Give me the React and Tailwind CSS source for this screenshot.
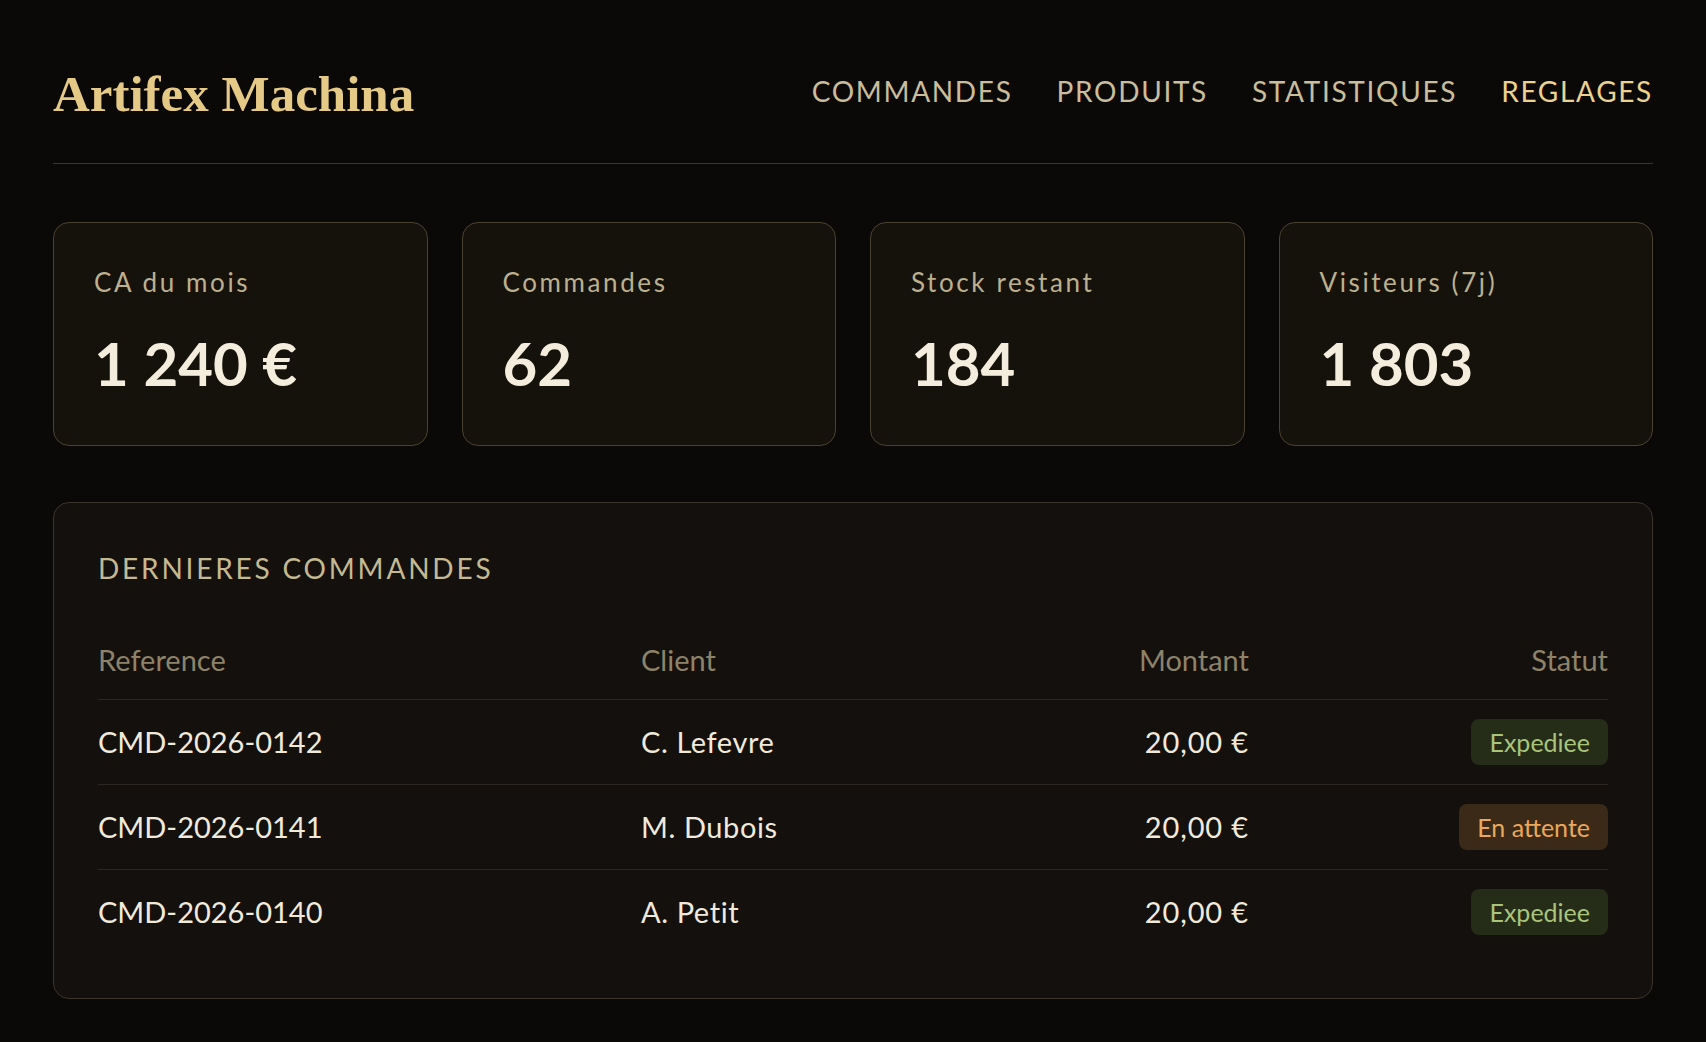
const stats = [
  { label: "CA du mois", value: "1 240 €" },
  { label: "Commandes", value: "62" },
  { label: "Stock restant", value: "184" },
  { label: "Visiteurs (7j)", value: "1 803" },
];

const orders = [
  { ref: "CMD-2026-0142", client: "C. Lefevre", amount: "20,00 €", status: "shipped" },
  { ref: "CMD-2026-0141", client: "M. Dubois", amount: "20,00 €", status: "pending" },
  { ref: "CMD-2026-0140", client: "A. Petit", amount: "20,00 €", status: "shipped" },
];

const navItems = ["Commandes", "Produits", "Statistiques", "Reglages"];

const StatusBadge = ({ status }) =>
  status === "shipped" ? (
    <span className="inline-block rounded-lg bg-[#252c18] px-[18px] py-[6px] text-[25px] leading-[34px] text-[#a9c57b]">
      Expediee
    </span>
  ) : (
    <span className="inline-block rounded-lg bg-[#3b2a18] px-[18px] py-[6px] text-[25px] leading-[34px] text-[#e9a85a]">
      En attente
    </span>
  );

const App = () => {
  return (
    <div className="min-h-screen bg-[#0b0907] font-['Lato','Noto_Sans',sans-serif]">
      <div className="mx-auto max-w-[1600px]">
        <header className="flex items-center justify-between border-b border-[#3d3526] pt-16 pb-[38px]">
          <h1 className="font-['Liberation_Serif','Times_New_Roman',serif] text-[51px] font-bold leading-[61px] text-[#e5c987]">
            Artifex Machina
          </h1>
          <nav className="mb-2 flex gap-[44px]">
            {navItems.map((item, i) => (
              <a
                key={item}
                href="#"
                className={
                  i === navItems.length - 1
                    ? "text-[28px] uppercase leading-[42px] tracking-[0.06em] text-[#ecd28e]"
                    : "text-[28px] uppercase leading-[42px] tracking-[0.06em] text-[#c9bd9b]"
                }
              >
                {item}
              </a>
            ))}
          </nav>
        </header>

        <section className="mt-[58px] grid grid-cols-4 gap-[34px]">
          {stats.map((s) => (
            <div
              key={s.label}
              className="rounded-2xl border border-[#4a4230] bg-[#15120c] px-10 pt-10 pb-[52px]"
            >
              <div className="text-[26px] leading-[39px] tracking-[0.1em] text-[#bdb08e]">
                {s.label}
              </div>
              <div className="mt-[31px] text-[60px] font-bold leading-[60px] text-[#f4eddd]">
                {s.value}
              </div>
            </div>
          ))}
        </section>

        <section className="mt-14 rounded-2xl border border-[#3b342a] bg-[#13100d] p-11">
          <h2 className="text-[28px] uppercase leading-[42px] tracking-[0.1em] text-[#c5b991]">
            Dernieres commandes
          </h2>

          <div className="mt-[29px]">
            <div className="grid grid-cols-[543px_1fr_1fr_359px] border-b border-[#2c2720] pt-[21px] pb-[18px] text-[29px] leading-[42px] text-[#8e8269]">
              <div>Reference</div>
              <div>Client</div>
              <div className="text-right">Montant</div>
              <div className="text-right">Statut</div>
            </div>
            {orders.map((o, i) => (
              <div
                key={o.ref}
                className={
                  i < orders.length - 1
                    ? "grid grid-cols-[543px_1fr_1fr_359px] items-center border-b border-[#2c2720] py-[21px] text-[29px] leading-[42px] text-[#f1eadb]"
                    : "grid grid-cols-[543px_1fr_1fr_359px] items-center py-[21px] text-[29px] leading-[42px] text-[#f1eadb]"
                }
              >
                <div>{o.ref}</div>
                <div className="tracking-[0.02em]">{o.client}</div>
                <div className="text-right tracking-[0.03em]">{o.amount}</div>
                <div className="flex h-[42px] items-center justify-end">
                  <StatusBadge status={o.status} />
                </div>
              </div>
            ))}
          </div>
        </section>
      </div>
    </div>
  );
};

export default App;
